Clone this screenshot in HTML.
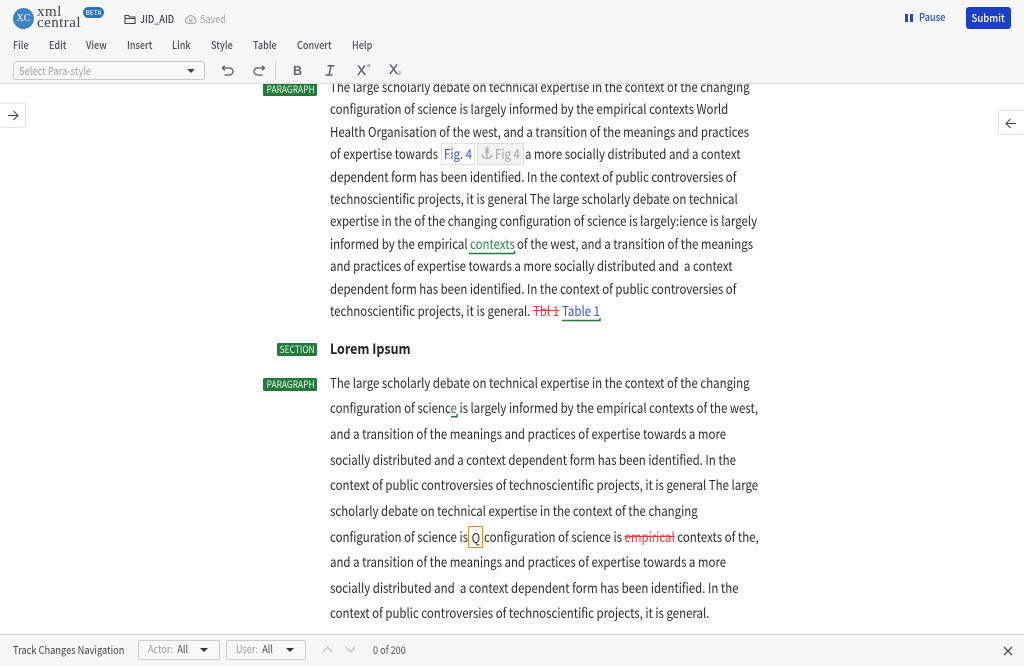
<!DOCTYPE html>
<html>
<head>
<meta charset="utf-8">
<style>
html,body{margin:0;padding:0;width:1024px;height:666px;overflow:hidden;background:#fff}
body{position:relative;font-family:"Noto Sans CJK JP","Liberation Sans",sans-serif;color:#2c2c2c;font-size:13.2px}
.l,.a{position:absolute;white-space:nowrap;line-height:20px;height:20px}
.l,.t,.m{transform:scaleX(.868);transform-origin:0 50%}
.l{left:330px;color:#2c2c2c}
.s{display:inline-block;transform:scaleX(.868);transform-origin:50% 50%}
.sl{display:inline-block;transform:scaleX(.868);transform-origin:0 50%}
#hd{position:absolute;left:0;top:0;width:1024px;height:83px;background:#f7f7f8;border-bottom:1px solid #dcdcdc;z-index:5}
#ft{position:absolute;left:0;top:634px;width:1024px;height:32px;background:#f7f7f8;border-top:1px solid #cfcfcf;z-index:5}
.m{position:absolute;top:36px;line-height:20px;font-size:10.5px;color:#4a4f57;white-space:nowrap;font-weight:500}
.tag{position:absolute;box-sizing:border-box;background:#217a3c;color:#eef6f0;font-size:9.7px;line-height:13px;height:13px;border-radius:1.5px;text-align:center;white-space:nowrap;overflow:hidden}
.side{position:absolute;width:26px;height:25px;background:#fff;border:1px solid #e3e3e3;box-sizing:border-box}
.blue{color:#2f50d8}
.del{color:#e8383d;text-decoration:line-through}
.dd{position:absolute;top:5px;height:20px;box-sizing:border-box;border:1px solid #ccc;border-radius:2px;background:#f9f9f9;font-size:10.5px;line-height:18px;color:#9a9a9a;white-space:nowrap}
.dd b{font-weight:400;color:#444}
.x{color:#5d646c;-webkit-text-stroke:.35px #5d646c}
svg{position:absolute;overflow:visible}
</style>
</head>
<body>
<div id="hd">
  <div class="a" style="left:13px;top:8px;width:21px;height:21px;border-radius:50%;background:#3f83c4;color:#fff;font:10px/21px 'Liberation Serif',serif;text-align:center">XC</div>
  <div class="a" style="left:37px;top:6px;font:15px/12px 'Liberation Serif',serif;color:#3c4450;height:12px;letter-spacing:.45px">xml</div>
  <div class="a" style="left:37px;top:17px;font:15px/12px 'Liberation Serif',serif;color:#3c4450;height:12px;letter-spacing:.45px">central</div>
  <div class="a" style="left:83px;top:7px;width:21px;height:11px;border-radius:6px;background:#2b74b8;color:#dfeefa;font-size:6.5px;line-height:11px;text-align:center;font-weight:500">BETA</div>
  <svg style="left:124px;top:14px" width="12" height="11" viewBox="0 0 12 11" fill="none" stroke="#444" stroke-width="1.1"><path d="M1 9.5V1.5H4.5L5.5 3H11V9.5Z M1 4.5H11"/></svg>
  <div class="a t" style="left:140px;top:10px;font-size:10.5px;font-weight:500;color:#3b3f46">JID_AID</div>
  <svg style="left:184px;top:14px" width="13" height="10" viewBox="0 0 13 10" fill="none" stroke="#9b9b9b" stroke-width="1"><path d="M3.5 9.2H10a2.3 2.3 0 0 0 .4-4.5A3.6 3.6 0 0 0 3.6 3.6 2.9 2.9 0 0 0 3.5 9.2Z M4.8 6l1.4 1.4 2.4-2.4"/></svg>
  <div class="a t" style="left:200px;top:10px;font-size:10.5px;color:#a0a0a0">Saved</div>
  <div class="a" style="left:905px;top:14px;width:3px;height:8px;background:#2747c9"></div>
  <div class="a" style="left:910px;top:14px;width:3px;height:8px;background:#2747c9"></div>
  <div class="a t" style="left:919px;top:8px;font-size:10.7px;font-weight:500;color:#2f50d0">Pause</div>
  <div class="a" style="left:966px;top:7px;width:45px;height:22px;background:#1a3fc8;border-radius:3px;color:#fff;font-size:11px;line-height:22px;text-align:center;font-weight:500"><span class="s">Submit</span></div>

  <div class="m" style="left:13px">File</div>
  <div class="m" style="left:49px">Edit</div>
  <div class="m" style="left:86px">View</div>
  <div class="m" style="left:127px">Insert</div>
  <div class="m" style="left:172px">Link</div>
  <div class="m" style="left:211px">Style</div>
  <div class="m" style="left:253px">Table</div>
  <div class="m" style="left:297px">Convert</div>
  <div class="m" style="left:352px">Help</div>

  <div class="a" style="left:13px;top:61px;width:192px;height:19px;box-sizing:border-box;border:1px solid #c9c9c9;border-radius:3px;background:#f9f9f9;color:#a2a2a2;font-size:10.8px;line-height:18px;padding-left:5px"><span class="sl">Select Para-style</span></div>
  <svg style="left:187px;top:69px" width="8" height="4"><path d="M0 0H8L4 4Z" fill="#444"/></svg>
  <svg style="left:221px;top:64px" width="13" height="13" viewBox="0 0 13 13" fill="none" stroke="#555" stroke-width="1.2"><path d="M4 1.5 1.5 4 4 6.5M1.5 4H8.5a3 3 0 0 1 0 7H3.5"/></svg>
  <svg style="left:253px;top:64px" width="13" height="13" viewBox="0 0 13 13" fill="none" stroke="#555" stroke-width="1.2"><path d="M9 1.5 11.5 4 9 6.5M11.5 4H4.5a3 3 0 0 0 0 7H9.5"/></svg>
  <div class="a" style="left:275px;top:61px;width:1px;height:19px;background:#d8d8d8"></div>
  <div class="a" style="left:293px;top:61px;font:bold 12.5px/20px 'Liberation Sans',sans-serif;color:#5d646c">B</div>
  <svg style="left:325px;top:65px" width="10" height="11" viewBox="0 0 10 11" fill="none" stroke="#5d646c" stroke-width="1.5"><path d="M2.5 .8H9.5M.5 10H7.5M6 .8 4 10"/></svg>
  <div class="a x" style="left:357px;top:61px;font:13.5px/20px 'Liberation Sans',sans-serif">X</div>
  <div class="a" style="left:367px;top:59px;font:5.5px/14px 'Liberation Sans',sans-serif;color:#5d646c">a</div>
  <div class="a x" style="left:389px;top:60px;font:13.5px/20px 'Liberation Sans',sans-serif">X</div>
  <div class="a" style="left:398px;top:67px;font:5.5px/14px 'Liberation Sans',sans-serif;color:#5d646c">2</div>
</div>

<div class="side" style="left:0;top:103px;border-left:0"></div>
<svg style="left:7px;top:110px" width="12" height="11" viewBox="0 0 12 11" fill="none" stroke="#444" stroke-width="1"><path d="M1 5.5H11M6.5 1 11 5.5 6.5 10"/></svg>
<div class="side" style="left:998px;top:110px;border-right:0"></div>
<svg style="left:1005px;top:118px" width="12" height="11" viewBox="0 0 12 11" fill="none" stroke="#444" stroke-width="1"><path d="M11 5.5H1M5.5 1 1 5.5 5.5 10"/></svg>

<div class="tag" style="left:263px;top:83px;width:54px"><span class="s">PARAGRAPH</span></div>
<div class="l" style="top:77px">The large scholarly debate on technical expertise in the context of the changing</div>
<div class="l" style="top:99px">configuration of science is largely informed by the empirical contexts World</div>
<div class="l" style="top:122px">Health Organisation of the west, and a transition of the meanings and practices</div>
<div class="l" style="top:144px">of expertise towards</div>
<div class="a blue t" style="left:444px;top:144px">Fig. 4</div>
<div class="a" style="left:441px;top:143px;width:34px;height:22px;box-sizing:border-box;border:1px solid #e3e3e3"></div>
<div class="a" style="left:477px;top:143px;width:47px;height:22px;box-sizing:border-box;border:1px solid #dcdcdc;background:#f3f3f3"></div>
<div class="a t" style="left:495px;top:144px;color:#a0a0a0">Fig 4</div>
<svg style="left:481px;top:147px" width="12" height="13" viewBox="0 0 12 13" fill="none" stroke="#a0a0a0" stroke-width="1.1"><circle cx="6" cy="2" r="1.2"/><path d="M6 3.2V11.5M3.8 5H8.2M1 7.5C1.5 10 3.5 11.5 6 11.5S10.5 10 11 7.5"/></svg>
<div class="l" style="left:525px;top:144px">a more socially distributed and a context</div>
<div class="l" style="top:167px">dependent form has been identified. In the context of public controversies of</div>
<div class="l" style="top:189px">technoscientific projects, it is general The large scholarly debate on technical</div>
<div class="l" style="top:211px">expertise in the of the changing configuration of science is largely:ience is largely</div>
<div class="l" style="top:234px">informed by the empirical</div>
<div class="a t" style="left:470px;top:234px;color:#2a8540">contexts</div>
<svg style="left:469px;top:251px" width="47" height="4" fill="none" stroke="#217a3c" stroke-width="1.5"><path d="M0 2.5H45.5V0"/></svg>
<div class="l" style="left:517px;top:234px">of the west, and a transition of the meanings</div>
<div class="l" style="top:256px">and practices of expertise towards a more socially distributed and&nbsp; a context</div>
<div class="l" style="top:279px">dependent form has been identified. In the context of public controversies of</div>
<div class="l" style="top:301px">technoscientific projects, it is general.</div>
<div class="a del t" style="left:533px;top:301px">Tbl 1</div>
<div class="a blue t" style="left:562px;top:301px">Table 1</div>
<svg style="left:562px;top:318px" width="39" height="4" fill="none" stroke="#217a3c" stroke-width="1.5"><path d="M0 2.5H38V0"/></svg>

<div class="tag" style="left:277px;top:343px;width:40px"><span class="s">SECTION</span></div>
<div class="a t" style="left:330px;top:339px;font-size:14.4px;font-weight:700;color:#222">Lorem Ipsum</div>

<div class="tag" style="left:263px;top:378px;width:54px"><span class="s">PARAGRAPH</span></div>
<div class="l" style="top:373px">The large scholarly debate on technical expertise in the context of the changing</div>
<div class="l" style="top:398px">configuration of scienc<span style="color:#2a8540">e</span> is largely informed by the empirical contexts of the west,</div>
<svg style="left:451px;top:414px" width="7" height="4" fill="none" stroke="#217a3c" stroke-width="1.5"><path d="M0 2.8H6V0"/></svg>
<div class="l" style="top:424px">and a transition of the meanings and practices of expertise towards a more</div>
<div class="l" style="top:450px">socially distributed and a context dependent form has been identified. In the</div>
<div class="l" style="top:475px">context of public controversies of technoscientific projects, it is general The large</div>
<div class="l" style="top:501px">scholarly debate on technical expertise in the context of the changing</div>
<div class="l" style="top:527px">configuration of science is</div>
<div class="a" style="left:468px;top:526px;width:15px;height:22px;box-sizing:border-box;border:1px solid #f08a2c;border-radius:1px;text-align:center;line-height:21px"><span class="s">Q</span></div>
<div class="l" style="left:484px;top:527px">configuration of science is <span class="del">empirical</span> contexts of the,</div>
<div class="l" style="top:552px">and a transition of the meanings and practices of expertise towards a more</div>
<div class="l" style="top:578px">socially distributed and&nbsp; a context dependent form has been identified. In the</div>
<div class="l" style="top:603px">context of public controversies of technoscientific projects, it is general.</div>

<div id="ft">
  <div class="a t" style="left:13px;top:6px;font-size:10.7px;color:#444;line-height:19px">Track Changes Navigation</div>
  <div class="dd" style="left:138px;width:82px;padding-left:9px"><span class="sl">Actor:&nbsp; <b>All</b></span></div>
  <svg style="left:200px;top:13px" width="8" height="4"><path d="M0 0H8L4 4Z" fill="#333"/></svg>
  <div class="dd" style="left:226px;width:80px;padding-left:9px"><span class="sl">User:&nbsp; <b>All</b></span></div>
  <svg style="left:286px;top:13px" width="8" height="4"><path d="M0 0H8L4 4Z" fill="#333"/></svg>
  <svg style="left:322px;top:11px" width="11" height="7" fill="none" stroke="#c4c4c4" stroke-width="1.4"><path d="M.8 6 5.5 1.2 10.2 6"/></svg>
  <svg style="left:345px;top:11px" width="11" height="7" fill="none" stroke="#c4c4c4" stroke-width="1.4"><path d="M.8 1 5.5 5.8 10.2 1"/></svg>
  <div class="a t" style="left:373px;top:6px;font-size:10.5px;color:#555;line-height:19px">0 of 200</div>
  <svg style="left:1003px;top:11px" width="10" height="10" fill="none" stroke="#555" stroke-width="1.4"><path d="M1 1 9 9M9 1 1 9"/></svg>
</div>
</body>
</html>
